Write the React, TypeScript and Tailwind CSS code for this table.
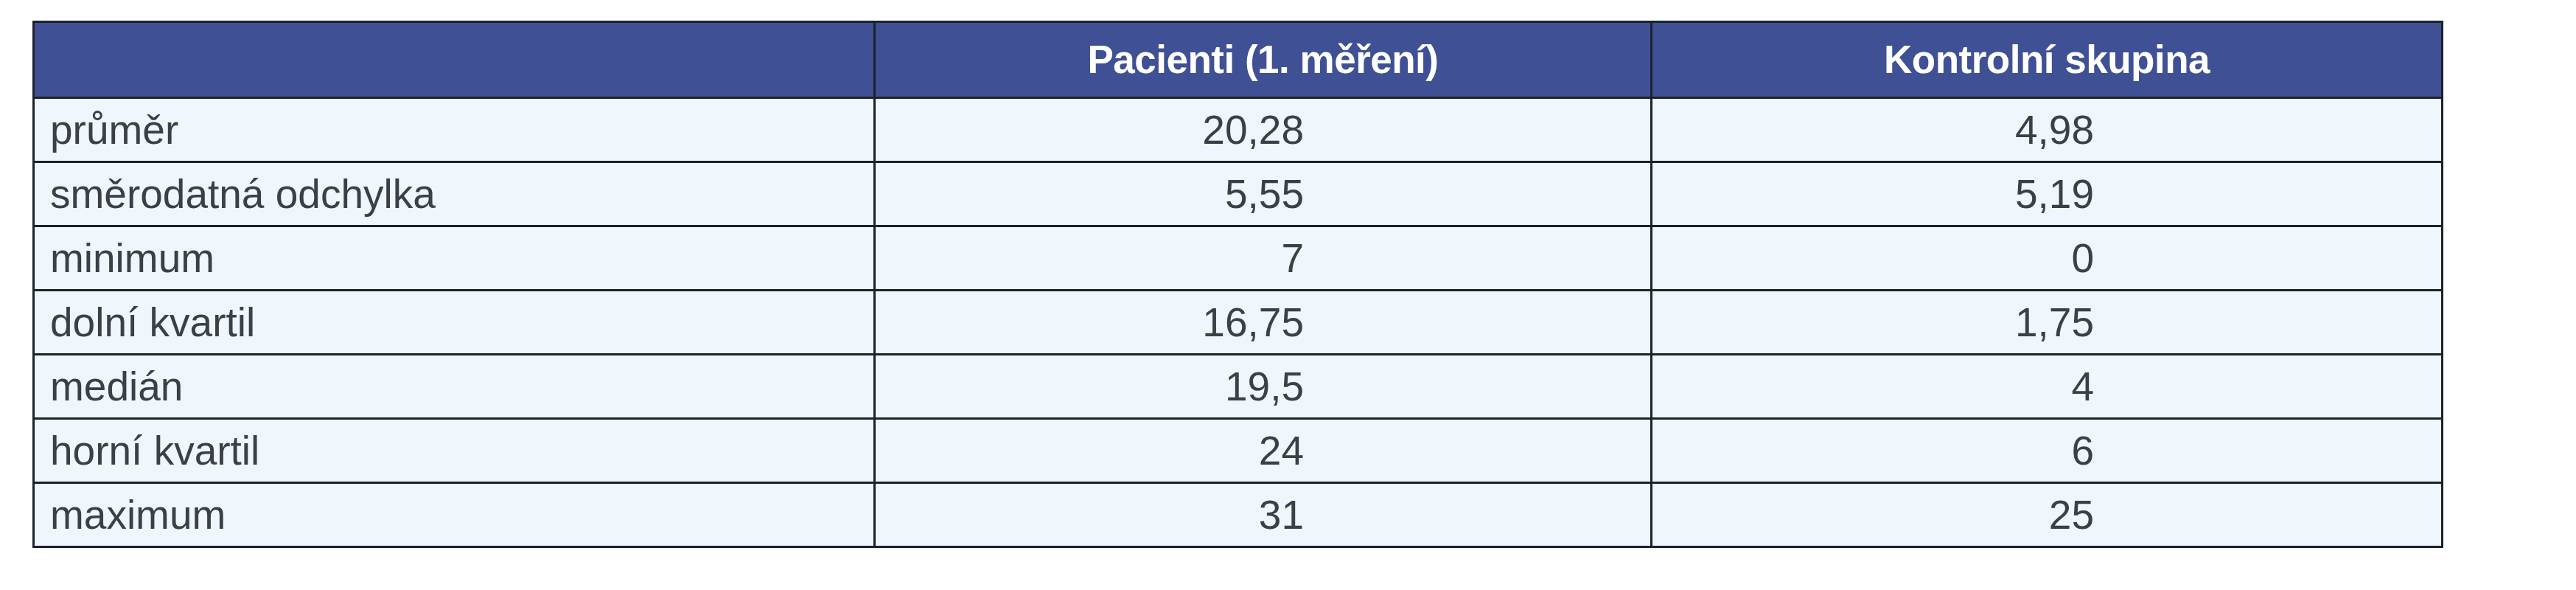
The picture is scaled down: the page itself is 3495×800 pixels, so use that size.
const rows: [string, string, string][] = [
  ["průměr", "20,28", "4,98"],
  ["směrodatná odchylka", "5,55", "5,19"],
  ["minimum", "7", "0"],
  ["dolní kvartil", "16,75", "1,75"],
  ["medián", "19,5", "4"],
  ["horní kvartil", "24", "6"],
  ["maximum", "31", "25"],
];

// Statistics table: header in blue, light rows with dark grid lines
const App = () => {
  return (
    <div className="w-[3495px] h-[800px] bg-white pt-[28px] pl-[44px] font-['Liberation_Sans',Arial,sans-serif]">
      <table className="table-fixed border-collapse w-[3268px] border-[3px] border-[#1c222b]">
        <colgroup>
          <col className="w-[1141px]" />
          <col className="w-[1054px]" />
          <col className="w-[1073px]" />
        </colgroup>
        <thead>
          <tr className="bg-[#3f5194] h-[103px]">
            <th className="border-[3px] border-[#1c222b]" />
            <th className="border-[3px] border-[#1c222b] text-center text-[53px] font-bold text-white tracking-[-0.5px]">
              Pacienti (1. měření)
            </th>
            <th className="border-[3px] border-[#1c222b] text-center text-[53px] font-bold text-white tracking-[-0.5px]">
              Kontrolní skupina
            </th>
          </tr>
        </thead>
        <tbody>
          {rows.map((row) => (
            <tr key={row[0]} className="bg-[#eff6fc] h-[87px]">
              <td className="border-[3px] border-[#1c222b] pl-[21px] text-[55px] text-[#3b4046] leading-none">
                {row[0]}
              </td>
              <td className="border-[3px] border-[#1c222b] text-right pr-[470px] text-[55px] text-[#3b4046] leading-none">
                {row[1]}
              </td>
              <td className="border-[3px] border-[#1c222b] text-right pr-[471px] text-[55px] text-[#3b4046] leading-none">
                {row[2]}
              </td>
            </tr>
          ))}
        </tbody>
      </table>
    </div>
  );
};

export default App;
